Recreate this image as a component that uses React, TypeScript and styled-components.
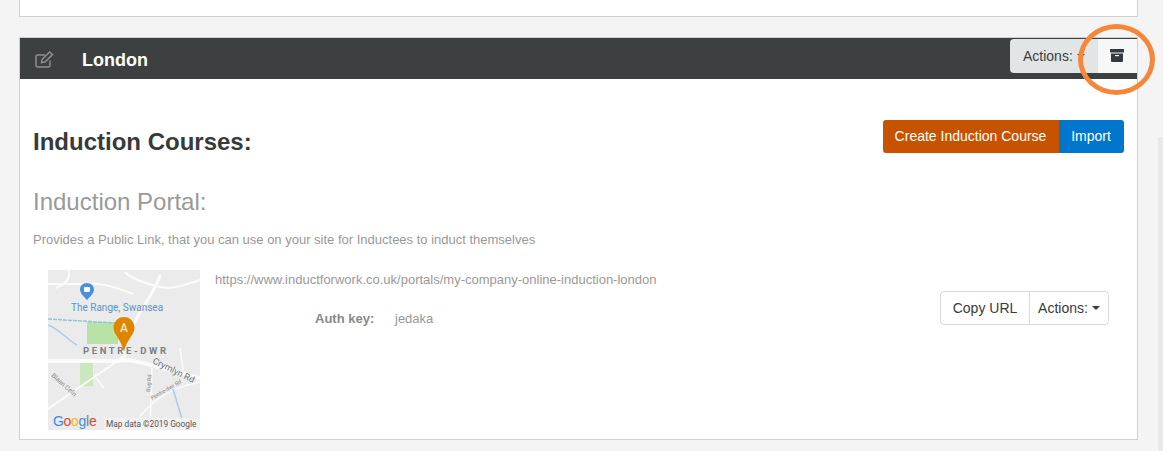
import React from 'react';
import styled, { createGlobalStyle } from 'styled-components';

const GlobalStyle = createGlobalStyle`
  html, body {
    margin: 0;
    padding: 0;
    height: 451px;
    overflow: hidden;
    background: #f4f4f4;
    font-family: 'Liberation Sans', Arial, sans-serif;
    color: #333;
  }
  * { box-sizing: border-box; }
`;

const Page = styled.div`
  position: relative;
  width: 1163px;
  height: 451px;
  padding: 0 25px 0 19px;
  overflow: hidden;
`;

const ScrollTrack = styled.div`
  position: absolute;
  right: 0;
  top: 137px;
  bottom: 0;
  width: 5px;
  background: #e9e9e9;
`;

const TopCard = styled.div`
  height: 17px;
  background: #fff;
  border: 1px solid #cfcfcf;
  border-top: none;
  margin-bottom: 20px;
`;

const Card = styled.section`
  background: #fff;
  border: 1px solid #cfcfcf;
  height: 403px;
`;

const Header = styled.header`
  height: 41px;
  background: #3c4040;
  display: flex;
  align-items: flex-start;
  padding: 1px 0 0 15px;
`;

const EditIcon = styled.svg`
  width: 19px;
  height: 17px;
  flex: none;
  margin-top: 12px;
`;

const Title = styled.h2`
  margin: 11px 0 0 28px;
  font-size: 18px;
  line-height: 21px;
  font-weight: 700;
  color: #fff;
  flex: 1;
`;

const HeaderActions = styled.div`
  display: flex;
  height: 34px;
`;

const ActionsLabel = styled.div`
  width: 88px;
  background: #e1e5e5;
  border-radius: 4px 0 0 4px;
  font-size: 14px;
  color: #3c4040;
  display: flex;
  align-items: center;
  gap: 4px;
  padding-left: 13px;
`;

const ArchiveButton = styled.div`
  width: 39px;
  padding: 0 2px 2px 0;
  background: #f6f7f7;
  display: flex;
  align-items: center;
  justify-content: center;
`;

const Ring = styled.div`
  position: absolute;
  left: 1078px;
  top: 24px;
  width: 77px;
  height: 71px;
  border: 5px solid #f5873a;
  border-radius: 50%;
`;

const Body = styled.div`
  padding: 41px 13px 0;
`;

const CoursesRow = styled.div`
  display: flex;
  align-items: flex-start;
  justify-content: space-between;
`;

const CoursesTitle = styled.h3`
  margin: 9px 0 0;
  font-size: 24px;
  line-height: 26px;
  font-weight: 700;
  color: #373a3c;
`;

const ButtonGroup = styled.div`
  display: flex;
`;

const SolidButton = styled.div<{ $bg: string; $width: number; $radius: string }>`
  width: ${({ $width }) => $width}px;
  height: 33px;
  padding: 0 1px 2px 0;
  background: ${({ $bg }) => $bg};
  border-radius: ${({ $radius }) => $radius};
  color: #fff;
  font-size: 14px;
  display: flex;
  align-items: center;
  justify-content: center;
`;

const PortalTitle = styled.h4`
  margin: 33px 0 0;
  font-size: 24px;
  line-height: 28px;
  font-weight: 400;
  color: #999;
`;

const PortalHint = styled.p`
  margin: 16px 0 0;
  font-size: 13px;
  line-height: 16px;
  color: #999;
`;

const PortalRow = styled.div`
  display: flex;
  margin: 22px 15px 0 15px;
`;

const MapBox = styled.svg`
  width: 152px;
  height: 160px;
  flex: none;
  display: block;
`;

const PortalInfo = styled.div`
  flex: 1;
  margin-left: 15px;
  padding-top: 2px;
`;

const PortalUrl = styled.div`
  font-size: 13px;
  line-height: 16px;
  color: #999;
`;

const AuthRow = styled.div`
  display: flex;
  margin: 23px 0 0 100px;
  font-size: 13px;
  line-height: 16px;
`;

const AuthLabel = styled.span`
  width: 80px;
  font-weight: 700;
  color: #888;
`;

const AuthValue = styled.span`
  color: #999;
`;

const OutlineGroup = styled.div`
  display: flex;
  height: 34px;
  margin-top: 21px;
  border: 1px solid #d9d9d9;
  border-radius: 4px;
  font-size: 14px;
  color: #3a3a3a;
`;

const OutlineButton = styled.div<{ $width: number; $divider?: boolean }>`
  width: ${({ $width }) => $width}px;
  display: flex;
  align-items: center;
  justify-content: center;
  gap: 4px;
  border-left: ${({ $divider }) => ($divider ? '1px solid #d9d9d9' : 'none')};
`;

const Caret = styled.span`
  width: 0;
  height: 0;
  border-left: 4px solid transparent;
  border-right: 4px solid transparent;
  border-top: 4px solid #3a3a3a;
`;

const MapImage = () => (
  <MapBox viewBox="0 0 152 160">
    <rect width="152" height="160" fill="#ebebeb" />
    <rect x="39" y="52" width="31" height="22" fill="#b9e2a6" />
    <rect x="32" y="92" width="13" height="24" fill="#cbe8bd" />
    <g fill="none" stroke="#fbfbfb" strokeWidth="2">
      <path d="M0 91 H70 C85 88 100 95 152 108" strokeWidth="4" />
      <path d="M0 139 L78 85" />
      <path d="M112 5 C108 20 95 36 92 42 C85 55 78 70 75 85" strokeWidth="3" />
      <path d="M0 14 H35 C50 12 65 16 85 24" />
      <path d="M77 2 C82 8 92 12 112 17 C125 20 140 14 152 10" />
      <path d="M20 0 C25 10 12 16 8 18" />
      <path d="M102 160 L104 98" strokeWidth="1.500" />
      <path d="M92 146 C110 125 125 118 152 112" strokeWidth="1.500" />
      <path d="M132 78 L135 100" strokeWidth="1.500" />
      <path d="M48 108 L56 118" strokeWidth="1.500" />
    </g>
    <path d="M0 49 L67 53" stroke="#8ec7d6" strokeWidth="1.500" strokeDasharray="4 1" fill="none" />
    <path d="M0 55 C12 60 20 70 29 75" stroke="#a4cdf0" strokeWidth="1.500" fill="none" />
    <path d="M125 119 L134 149" stroke="#a4cdf0" strokeWidth="1.500" fill="none" />
    <path d="M39 13 c4.500 0 7 3 7 6.500 c0 4 -4 7 -7 10.500 c-3 -3.500 -7 -6.500 -7 -10.500 c0 -3.500 2.500 -6.500 7 -6.500 z" fill="#4a90e2" />
    <rect x="36" y="17" width="6" height="5" rx="1" fill="#fff" />
    <text x="23" y="41" fontSize="10" fill="#5b93c9" fontFamily="Roboto, sans-serif">The Range, Swansea</text>
    <path d="M76 47 c6 0 10.500 5 10.500 10.500 c0 7 -7 11 -10.500 24 c-3.500 -13 -10.500 -17 -10.500 -24 c0 -5.500 4.500 -10.500 10.500 -10.500 z" fill="#df8600" />
    <text x="76" y="62" fontSize="12" fontWeight="500" fill="#fbe3bf" textAnchor="middle" fontFamily="Roboto, sans-serif">A</text>
    <text x="35" y="84" fontSize="9.500" fontWeight="700" letterSpacing="2.600" fill="#7b7f83" fontFamily="Roboto, sans-serif">PENTRE-DWR</text>
    <text x="104" y="93" fontSize="9" fill="#70757a" transform="rotate(26 104 93)" fontFamily="Roboto, sans-serif">Crymlyn Rd</text>
    <text x="3" y="106" fontSize="6.500" fill="#80858a" transform="rotate(42 3 106)" fontFamily="Roboto, sans-serif">Blaen Cefn</text>
    <text x="102" y="122" fontSize="5.500" fill="#80858a" transform="rotate(-85 102 122)" fontFamily="Roboto, sans-serif">Bug Rd</text>
    <text x="104" y="130" fontSize="5.500" fill="#80858a" transform="rotate(-30 104 130)" fontFamily="Roboto, sans-serif">Pentre-dwr Rd</text>
    <rect x="56" y="148" width="96" height="12" fill="#f2f2f2" fillOpacity="0.85" />
    <text x="58" y="157" fontSize="8.300" fill="#555" fontFamily="Roboto, sans-serif">Map data ©2019 Google</text>
    <text x="5" y="156" fontSize="14" letterSpacing="-0.300" fontFamily="'Liberation Sans', sans-serif">
      <tspan fill="#4285f4">G</tspan>
      <tspan fill="#ea4335">o</tspan>
      <tspan fill="#fbbc05">o</tspan>
      <tspan fill="#4285f4">g</tspan>
      <tspan fill="#34a853">l</tspan>
      <tspan fill="#ea4335">e</tspan>
    </text>
  </MapBox>
);

export default function App() {
  return (
    <Page>
      <GlobalStyle />
      <TopCard />
      <Card>
        <Header>
          <EditIcon viewBox="0 0 19 17" fill="none" stroke="#8d9090" strokeWidth="1.500">
            <path d="M15 9.500 V14 a2 2 0 0 1 -2 2 H3 a2 2 0 0 1 -2 -2 V6 a2 2 0 0 1 2 -2 H10" />
            <path d="M6.500 11.500 L7 8.500 L14.500 1 L17.500 3.500 L10 11 Z" />
          </EditIcon>
          <Title>London</Title>
          <HeaderActions>
            <ActionsLabel>
              Actions: <Caret />
            </ActionsLabel>
            <ArchiveButton>
              <svg width="14" height="13" viewBox="0 0 14 13">
                <rect x="0" y="0" width="14" height="3.500" fill="#333a40" />
                <path d="M1 4.500 H13 V12 a1 1 0 0 1 -1 1 H2 a1 1 0 0 1 -1 -1 Z" fill="#333a40" />
                <rect x="5" y="6" width="4" height="1.200" fill="#f6f7f7" />
              </svg>
            </ArchiveButton>
          </HeaderActions>
        </Header>
        <Body>
          <CoursesRow>
            <CoursesTitle>Induction Courses:</CoursesTitle>
            <ButtonGroup>
              <SolidButton $bg="#c75300" $width={176} $radius="3px 0 0 3px">Create Induction Course</SolidButton>
              <SolidButton $bg="#0076cc" $width={65} $radius="0 3px 3px 0">Import</SolidButton>
            </ButtonGroup>
          </CoursesRow>
          <PortalTitle>Induction Portal:</PortalTitle>
          <PortalHint>Provides a Public Link, that you can use on your site for Inductees to induct themselves</PortalHint>
          <PortalRow>
            <MapImage />
            <PortalInfo>
              <PortalUrl>https://www.inductforwork.co.uk/portals/my-company-online-induction-london</PortalUrl>
              <AuthRow>
                <AuthLabel>Auth key:</AuthLabel>
                <AuthValue>jedaka</AuthValue>
              </AuthRow>
            </PortalInfo>
            <OutlineGroup>
              <OutlineButton $width={88}>Copy URL</OutlineButton>
              <OutlineButton $width={79} $divider>
                Actions: <Caret />
              </OutlineButton>
            </OutlineGroup>
          </PortalRow>
        </Body>
      </Card>
      <Ring />
      <ScrollTrack />
    </Page>
  );
}
